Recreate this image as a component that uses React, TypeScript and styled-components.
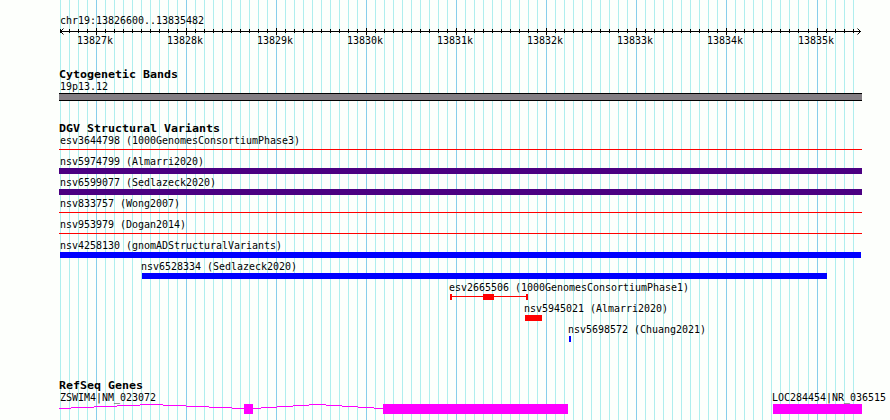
import React from "react";
import styled, { createGlobalStyle } from "styled-components";

const Global = createGlobalStyle`
  body { margin: 0; background: #fdfffc; }
`;

const Browser = styled.main`
  position: relative;
  width: 890px;
  height: 420px;
  overflow: hidden;
  background: #fdfffc;
  color: #000;
  font-family: "DejaVu Sans Mono", monospace;
`;

const Canvas = styled.svg`
  position: absolute;
  inset: 0;
  display: block;
`;

const Tracks = styled.div`
  position: relative;
  display: flex;
  flex-direction: column;
  padding: 15px 0 0 59px;
`;

const Label = styled.div<{ $indent?: number }>`
  height: 12px;
  margin-left: ${(p) => p.$indent ?? 1}px;
  font-size: 11px;
  line-height: 12px;
  white-space: pre;
  transform: scaleX(0.906);
  transform-origin: 0 0;
`;

const Title = styled.h2`
  height: 13px;
  margin: 0;
  font-size: 11px;
  font-weight: bold;
  line-height: 13px;
  white-space: pre;
  transform: scaleX(1.057);
  transform-origin: 0 0;
`;

const Glyph = styled.svg<{ $h: number }>`
  display: block;
  width: 831px;
  height: ${(p) => p.$h}px;
  shape-rendering: crispEdges;
`;

const Ticks = styled.div`
  display: flex;
  padding-left: 18px;
  height: 12px;
`;

const Tick = styled.div<{ $w: number }>`
  flex: 0 0 ${(p) => p.$w}px;
`;

const Section = styled.section<{ $top: number }>`
  margin-top: ${(p) => p.$top}px;
`;

const Variant = styled.div`
  height: 21px;
`;

const gridX = (i: number) => Math.floor(60.48 + i * 9.0063);
const GRID = Array.from({ length: 89 }, (_, i) => ({ x: gridX(i), major: i % 10 === 4 }));

type Shape = { x: number; w: number; y: number; h: number };
type VariantData = { name: string; at: number; color: string; shapes: Shape[] };

const thin: Shape[] = [{ x: 0, w: 803, y: 2, h: 1 }];
const wide: Shape[] = [{ x: 0, w: 803, y: 0, h: 6 }];

const VARIANTS: VariantData[] = [
  { name: "esv3644798 (1000GenomesConsortiumPhase3)", at: 1, color: "#f00", shapes: thin },
  { name: "nsv5974799 (Almarri2020)", at: 1, color: "#4b0082", shapes: wide },
  { name: "nsv6599077 (Sedlazeck2020)", at: 1, color: "#4b0082", shapes: wide },
  { name: "nsv833757 (Wong2007)", at: 1, color: "#f00", shapes: thin },
  { name: "nsv953979 (Dogan2014)", at: 1, color: "#f00", shapes: thin },
  { name: "nsv4258130 (gnomADStructuralVariants)", at: 1, color: "#00f", shapes: [{ x: 1, w: 801, y: 0, h: 6 }] },
  { name: "nsv6528334 (Sedlazeck2020)", at: 82, color: "#00f", shapes: [{ x: 83, w: 685, y: 0, h: 6 }] },
  {
    name: "esv2665506 (1000GenomesConsortiumPhase1)", at: 390, color: "#f00",
    shapes: [
      { x: 391, w: 2, y: 0, h: 6 },
      { x: 391, w: 78, y: 2, h: 1 },
      { x: 424, w: 11, y: 0, h: 6 },
      { x: 467, w: 2, y: 0, h: 6 },
    ],
  },
  { name: "nsv5945021 (Almarri2020)", at: 465, color: "#f00", shapes: [{ x: 466, w: 17, y: 0, h: 6 }] },
  { name: "nsv5698572 (Chuang2021)", at: 509, color: "#00f", shapes: [{ x: 510, w: 2, y: 0, h: 6 }] },
];

/* Intron runs as [start, end, row] */
const INTRONS: [number, number, number][] = [
  [0, 12, 4], [12, 35, 3], [35, 58, 2], [58, 81, 1], [81, 104, 0], [104, 127, 1], [127, 150, 2], [150, 173, 3], [173, 185, 4],
  [194, 202, 4], [202, 218, 3], [218, 234, 2], [234, 250, 1], [250, 267, 0], [267, 283, 1], [283, 299, 2], [299, 315, 3], [315, 324, 4],
];

const GeneLabels = styled.div`
  display: flex;
  height: 12px;
`;

const GeneLabel = styled.div<{ $w: number }>`
  flex: 0 0 ${(p) => p.$w}px;
`;

export default function App() {
  return (
    <Browser>
      <Global />
      <Canvas width="890" height="420" shapeRendering="crispEdges">
        {GRID.map((g) => (
          <rect key={g.x} x={g.x} y="0" width="1" height="420" fill={g.major ? "#87ceeb" : "#afeeee"} />
        ))}
      </Canvas>
      <Tracks>
        <Label>chr19:13826600..13835482</Label>
        <Glyph $h={8}>
          <rect x="1" y="4" width="801" height="1" />
          {GRID.map((g) => (
            <rect key={g.x} x={g.x - 59} y={g.major ? 1 : 2} width="1" height={g.major ? 7 : 4} />
          ))}
          <path d="M4.5 1.5L1.5 4.5L4.5 7.5M798.5 1.5L801.5 4.5L798.5 7.5" fill="none" stroke="#000" shapeRendering="auto" />
        </Glyph>
        <Ticks>
          {[27, 28, 29, 30, 31, 32, 33, 34, 35].map((n) => (
            <Tick key={n} $w={n === 34 ? 91 : 90}><Label $indent={0}>{`138${n}k`}</Label></Tick>
          ))}
        </Ticks>
        <Section $top={21}>
          <Title>Cytogenetic Bands</Title>
          <Label>19p13.12</Label>
          <Glyph $h={8}>
            <rect y="0" width="803" height="8" fill="#000" />
            <rect y="1" width="803" height="6" fill="#837e83" />
          </Glyph>
        </Section>
        <Section $top={21}>
          <Title>DGV Structural Variants</Title>
          {VARIANTS.map((v) => (
            <Variant key={v.name}>
              <Label $indent={v.at}>{v.name}</Label>
              <Glyph $h={9}>
                {v.shapes.map((s, i) => <rect key={i} x={s.x} y={s.y} width={s.w} height={s.h} fill={v.color} />)}
              </Glyph>
            </Variant>
          ))}
        </Section>
        <Section $top={34}>
          <Title>RefSeq Genes</Title>
          <GeneLabels>
            <GeneLabel $w={712}><Label>ZSWIM4|NM_023072</Label></GeneLabel>
            <GeneLabel $w={119}><Label>LOC284454|NR_036515</Label></GeneLabel>
          </GeneLabels>
          <Glyph $h={14}>
            <g fill="#f0f">
              {INTRONS.map(([a, b, y]) => <rect key={a} x={a} y={y} width={b - a} height="1" />)}
              <rect x="185" y="0" width="9" height="10" />
              <rect x="324" y="0" width="185" height="10" />
              <rect x="714" y="0" width="89" height="10" />
            </g>
          </Glyph>
        </Section>
      </Tracks>
    </Browser>
  );
}
